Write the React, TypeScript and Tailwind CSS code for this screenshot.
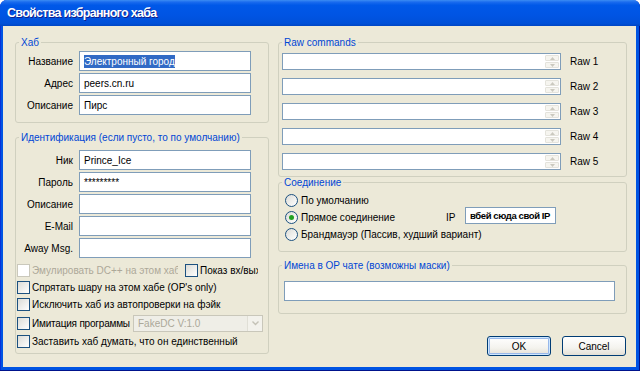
import type { ReactNode } from 'react'

interface BoxProps {
  children?: ReactNode
  className?: string
}

const Box = ({ children, className = '' }: BoxProps): JSX.Element => (
  <div
    className={`flex items-center overflow-hidden whitespace-nowrap border border-[#7F9DB9] bg-white px-[4px] ${className}`}
  >
    {children}
  </div>
)

interface GroupProps {
  title: string
  className?: string
  children?: ReactNode
}

const Group = ({ title, className = '', children }: GroupProps): JSX.Element => (
  <fieldset className={`m-0 min-w-0 rounded-[3px] border border-[#D0D0BF] p-0 ${className}`}>
    <legend className="ml-[3px] px-[2px] leading-[13px] text-[#0046D5]">{title}</legend>
    {children}
  </fieldset>
)

const Check = ({ disabled = false }: { disabled?: boolean }): JSX.Element => (
  <span
    className={
      disabled
        ? 'block h-[13px] w-[13px] shrink-0 border border-[#CAC8BB] bg-white'
        : 'block h-[13px] w-[13px] shrink-0 border border-[#1C5180] bg-[linear-gradient(135deg,#DCDCD7,#FFFFFF)]'
    }
  />
)

const Radio = ({ checked = false }: { checked?: boolean }): JSX.Element => (
  <span className="flex h-[13px] w-[13px] shrink-0 items-center justify-center rounded-full border border-[#1C5180] bg-[linear-gradient(135deg,#DCDCD7,#FFFFFF)]">
    {checked && <span className="h-[5px] w-[5px] rounded-full bg-[#21A121]" />}
  </span>
)

const Spin = (): JSX.Element => (
  <div className="ml-auto flex h-full w-[15px] flex-col gap-[1px] py-[1px] pr-[1px]">
    <div className="flex flex-1 items-center justify-center rounded-[1px] border border-[#E4E3DC] bg-[#F6F5F0]">
      <svg width="5" height="3" viewBox="0 0 5 3">
        <path d="M0 3 L2.5 0 L5 3Z" fill="#CBC9BF" />
      </svg>
    </div>
    <div className="flex flex-1 items-center justify-center rounded-[1px] border border-[#E4E3DC] bg-[#F6F5F0]">
      <svg width="5" height="3" viewBox="0 0 5 3">
        <path d="M0 0 L2.5 3 L5 0Z" fill="#CBC9BF" />
      </svg>
    </div>
  </div>
)

const hubRows: [string, ReactNode][] = [
  [
    'Название',
    <span className="bg-[#316AC5] text-white">Электронный город</span>,
  ],
  ['Адрес', 'peers.cn.ru'],
  ['Описание', 'Пирс'],
]

const idRows: [string, string][] = [
  ['Ник', 'Prince_Ice'],
  ['Пароль', '*********'],
  ['Описание', ''],
  ['E-Mail', ''],
  ['Away Msg.', ''],
]

export default function App(): JSX.Element {
  return (
    <div className="flex h-[371px] w-[640px] flex-col overflow-hidden rounded-t-[7px] bg-[#0054E3] font-['Liberation_Sans',Arial,sans-serif] text-[10px] leading-[13px] text-black shadow-[inset_-1px_-1px_0_#00138C,inset_1px_0_0_#0831D9]">
      <div className="flex h-[26px] shrink-0 items-center bg-[linear-gradient(180deg,#3C8CF3_0%,#1A6BEE_8%,#0058E8_20%,#0054E3_60%,#0050D8_90%,#0046C4_100%)] pl-[7px] text-[12.5px] font-bold tracking-[-0.7px] text-white [text-shadow:1px_1px_0_#0F1F8C]">
        Свойства избранного хаба
      </div>

      <div className="mb-[4px] ml-[3px] mr-[4px] flex-1 bg-[#ECE9D8] pl-[12px] pt-[10px]">
        <div className="grid grid-cols-[254px_349px] gap-x-[9px]">
          {/* left column */}
          <div className="flex flex-col gap-[8px]">
            <Group title="Хаб" className="h-[87px]">
              <div className="grid grid-cols-[57px_172px] gap-x-[6px] gap-y-[2px] pt-[2px]">
                {hubRows.map(([label, value]) => (
                  <div key={label} className="contents">
                    <span className="flex h-[20px] items-center justify-end whitespace-nowrap">{label}</span>
                    <Box className="h-[20px]">{value}</Box>
                  </div>
                ))}
              </div>
            </Group>

            <Group title="Идентификация (если пусто, то по умолчанию)" className="h-[223px]">
              <div className="grid grid-cols-[57px_172px] gap-x-[6px] gap-y-[2px] pt-[6px]">
                {idRows.map(([label, value]) => (
                  <div key={label} className="contents">
                    <span className="flex h-[20px] items-center justify-end whitespace-nowrap">{label}</span>
                    <Box className="h-[20px]">{value}</Box>
                  </div>
                ))}
              </div>

              <div className="mt-[4px] flex flex-col pl-[1px]">
                <div className="flex h-[17px] items-center">
                  <div className="flex w-[168px] items-center gap-[2px]">
                    <Check disabled />
                    <span className="w-[146px] overflow-hidden whitespace-nowrap text-[#ACA899]">
                      Эмулировать DC++ на этом хабе
                    </span>
                  </div>
                  <div className="flex items-center gap-[2px]">
                    <Check />
                    <span className="w-[58px] overflow-hidden whitespace-nowrap">Показ вх/вых</span>
                  </div>
                </div>
                <div className="flex h-[17px] items-center gap-[2px]">
                  <Check />
                  <span className="whitespace-nowrap">Спрятать шару на этом хабе (OP's only)</span>
                </div>
                <div className="flex h-[16px] items-center gap-[2px]">
                  <Check />
                  <span className="whitespace-nowrap">Исключить хаб из автопроверки на фэйк</span>
                </div>
                <div className="flex h-[22px] items-center">
                  <div className="flex w-[116px] items-center gap-[2px]">
                    <Check />
                    <span className="whitespace-nowrap tracking-[-0.2px]">Имитация программы</span>
                  </div>
                  <div className="flex h-[17px] w-[130px] items-center border border-[#C9C7BA] bg-[#EFEEE7] pl-[4px] text-[#ACA899]">
                    <span className="flex-1">FakeDC V:1.0</span>
                    <div className="flex h-full w-[15px] items-center justify-center border-l border-[#E0DFD6] bg-[#F3F2EC]">
                      <svg width="7" height="5" viewBox="0 0 7 5">
                        <path d="M0.5 0.5 L3.5 3.5 L6.5 0.5" stroke="#C4C2B6" strokeWidth="1.4" fill="none" />
                      </svg>
                    </div>
                  </div>
                </div>
                <div className="flex h-[15px] items-center gap-[2px]">
                  <Check />
                  <span className="whitespace-nowrap">Заставить хаб думать, что он единственный</span>
                </div>
              </div>
            </Group>
          </div>

          {/* right column */}
          <div className="flex flex-col">
            <Group title="Raw commands" className="h-[141px]">
              <div className="flex flex-col gap-[8px] pl-[3px] pt-[4px]">
                {[1, 2, 3, 4, 5].map((n) => (
                  <div key={n} className="flex items-center gap-[9px]">
                    <div className="flex h-[17px] w-[279px] items-center border border-[#7F9DB9] bg-white">
                      <Spin />
                    </div>
                    <span>Raw {n}</span>
                  </div>
                ))}
              </div>
            </Group>

            <Group title="Соединение" className="-mt-[1px] h-[76px]">
              <div className="flex flex-col pl-[6px] pt-[3px]">
                <div className="flex h-[17px] items-center gap-[3px]">
                  <Radio />
                  <span>По умолчанию</span>
                </div>
                <div className="flex h-[17px] items-center gap-[3px]">
                  <Radio checked />
                  <span className="w-[142px] whitespace-nowrap">Прямое соединение</span>
                  <span className="w-[16px]">IP</span>
                  <Box className="-mt-[4px] h-[17px] w-[91px] px-[3px] text-[9.5px] font-bold tracking-[-0.4px]">
                    вбей сюда свой IP
                  </Box>
                </div>
                <div className="flex h-[17px] items-center gap-[3px]">
                  <Radio />
                  <span>Брандмауэр (Пассив, худший вариант)</span>
                </div>
              </div>
            </Group>

            <Group title="Имена в OP чате (возможны маски)" className="mt-[7px] h-[55px]">
              <div className="pl-[5px] pt-[9px]">
                <Box className="h-[20px] w-[331px]" />
              </div>
            </Group>

            <div className="mt-[22px] flex justify-end gap-[11px] pr-[1px]">
              <button className="h-[20px] w-[64px] rounded-[3px] border border-[#003C74] bg-[linear-gradient(180deg,#FFFFFF_0%,#F4F3EE_60%,#E3E0D6_100%)] shadow-[inset_0_0_0_1px_#CEE7FF,inset_0_0_0_2px_#98B8EA]">
                OK
              </button>
              <button className="h-[20px] w-[64px] rounded-[3px] border border-[#003C74] bg-[linear-gradient(180deg,#FFFFFF_0%,#F4F3EE_60%,#E3E0D6_100%)]">
                Cancel
              </button>
            </div>
          </div>
        </div>
      </div>
    </div>
  )
}
